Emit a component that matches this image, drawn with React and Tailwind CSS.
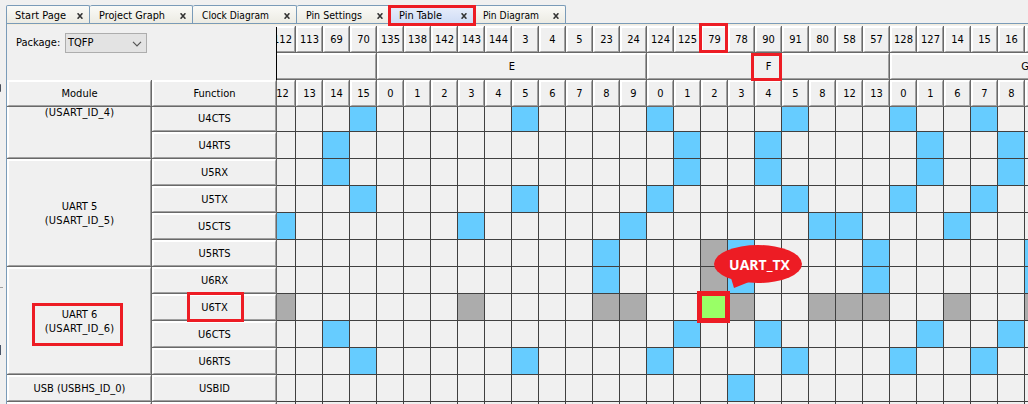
const FONT = 'font-["DejaVu_Sans_Condensed","DejaVu_Sans",sans-serif]';

const TABS = [
  { label: 'Start Page', width: 'w-[84px]', text: 'w-[51px]', first: true },
  { label: 'Project Graph', width: 'w-[103px]', text: 'w-[66px]' },
  { label: 'Clock Diagram', width: 'w-[104px]', text: 'w-[67px]' },
  { label: 'Pin Settings', width: 'w-[93px]', text: 'w-[56px]' },
  { label: 'Pin Table', width: 'w-[84px]', text: 'w-[43px]', active: true },
  { label: 'Pin Diagram', width: 'w-[92px]', text: 'w-[56px]' },
];

const PINS = [112, 113, 69, 70, 135, 138, 142, 143, 144, 3, 4, 5, 23, 24, 124, 125, 79, 78, 90, 91, 80, 58, 57, 128, 127, 14, 15, 16, ''];
const BITS = [12, 13, 14, 15, 0, 1, 2, 3, 4, 5, 6, 7, 8, 9, 0, 1, 2, 3, 4, 5, 8, 12, 13, 0, 1, 6, 7, 8, ''];
const PORTS = [
  { name: '', width: 'w-[108px]' },
  { name: 'E', width: 'w-[270px]' },
  { name: 'F', width: 'w-[243px]' },
  { name: 'G', width: 'w-[270px]' },
];

const MODULES = [
  { lines: ['(USART_ID_4)'], height: 'h-[54px]', align: 'items-start -mt-px' },
  { lines: ['UART 5', '(USART_ID_5)'], height: 'h-[108px]', align: 'items-center pt-px' },
  { lines: ['UART 6', '(USART_ID_6)'], height: 'h-[108px]', align: 'items-center pt-px' },
  { lines: ['USB (USBHS_ID_0)'], height: 'h-[27px]', align: 'items-center' },
  { lines: [''], height: 'h-[27px]', align: 'items-center' },
];

const A = [3, 9, 14, 19, 23, 26];
const B = [2, 15, 18, 24, 27];
const ROWS = [
  { fn: 'U4CTS', blue: A },
  { fn: 'U4RTS', blue: B },
  { fn: 'U5RX', blue: B },
  { fn: 'U5TX', blue: A },
  { fn: 'U5CTS', blue: [0, 7, 13, 20, 21, 25] },
  { fn: 'U5RTS', blue: [12, 17, 22, 28], gray: [16] },
  { fn: 'U6RX', blue: [12, 17, 22, 28], gray: [16] },
  { fn: 'U6TX', blue: [], gray: [0, 7, 12, 13, 17, 20, 21, 22, 25, 28], green: [16] },
  { fn: 'U6CTS', blue: B },
  { fn: 'U6RTS', blue: A },
  { fn: 'USBID', blue: [17] },
  { fn: '', blue: [] },
];

function cellColor(row, i) {
  if (row.green?.includes(i)) return 'bg-[#99ff66]';
  if (row.gray?.includes(i)) return 'bg-[#acacac]';
  if (row.blue.includes(i)) return 'bg-[#66ccff]';
  return 'bg-[#f0f0f0]';
}

function Raised({ className = '', children }) {
  return (
    <div className={`shrink-0 border-r border-b border-[#696969] ${className}`}>
      <div className="flex h-full w-full border-t-2 border-l-2 border-r border-b border-t-white border-l-white border-r-[#a0a0a0] border-b-[#a0a0a0] bg-[#f0f0f0]">
        {children}
      </div>
    </div>
  );
}

function Label({ children }) {
  return <span className="m-auto whitespace-nowrap">{children}</span>;
}

function Mark({ className }) {
  return <div className={`pointer-events-none absolute border-[#ed1c24] ${className}`} />;
}

function Tab({ tab }) {
  return (
    <div
      className={`flex h-[18px] shrink-0 items-center justify-between rounded-t-[2px] border-t border-r border-[#7a9bb8] ${
        tab.first ? 'border-l pl-[8px]' : 'pl-[9px]'
      } pr-[6px] ${tab.width} ${
        tab.active ? 'bg-linear-to-b from-[#e8eefb] to-[#cfdcf5]' : 'bg-linear-to-b from-[#fafaf7] to-[#ecebe3]'
      }`}
    >
      <svg className={`h-[17px] overflow-visible ${tab.text}`}>
        <text x="0" y="13" textLength="100%" lengthAdjust="spacingAndGlyphs" className="fill-black">
          {tab.label}
        </text>
      </svg>
      <svg className="mt-[2px] size-[6px]" viewBox="0 0 6 6">
        <path d="M.6 .3L5.4 5.7M5.4 .3L.6 5.7" stroke="#333" strokeWidth="1.6" />
      </svg>
    </div>
  );
}

export default function App() {
  return (
    <div className={`relative flex h-[404px] w-[1028px] overflow-hidden bg-[#f0f0f0] text-[11px] leading-[14px] text-black ${FONT}`}>
      <div className="flex w-[6px] shrink-0 flex-col items-start">
        <div className="mt-[84px] h-[8px] w-px rounded-r bg-[#4a4f5a]" />
        <div className="mt-[195px] h-px w-[3px] bg-[#a0a0a0]" />
        <div className="mt-[57px] h-[10px] w-px bg-[#4a5568]" />
      </div>
      <div className="flex min-w-0 flex-1 flex-col">
        <div className="flex h-[23px] shrink-0 items-end">
          {TABS.map((t) => (
            <Tab key={t.label} tab={t} />
          ))}
        </div>
        <div className="flex min-h-0 flex-1 border-t border-l border-[#7a9bb8]">
          <div className="flex w-[270px] shrink-0 flex-col">
            <div className="flex h-[56px] shrink-0 items-start border-t border-[#f4eddc] pt-[8px] pl-[9px]">
              <span className="mt-[3px] w-[49px] whitespace-nowrap">Package:</span>
              <div className="flex h-[20px] w-[82px] items-center justify-between border border-[#adadad] bg-[#e3e3e3] pr-[4px] pl-[2px]">
                <span>TQFP</span>
                <svg className="mt-[2px] h-[6px] w-[10px]" viewBox="0 0 10 6">
                  <path d="M1 .8L5 4.8L9 .8" fill="none" stroke="#555" strokeWidth="1.2" />
                </svg>
              </div>
            </div>
            <div className="flex h-[27px] shrink-0">
              <Raised className="w-[145px]"><Label>Module</Label></Raised>
              <Raised className="w-[125px]"><Label>Function</Label></Raised>
            </div>
            <div className="min-h-0 flex-1 overflow-hidden">
              <div className="-mt-[2px] flex">
                <div className="flex flex-col">
                  {MODULES.map((m, i) => (
                    <Raised key={i} className={`w-[145px] ${m.height}`}>
                      <div className={`flex w-full justify-center ${m.align}`}>
                        <div className="flex flex-col items-center whitespace-nowrap">
                          {m.lines.map((l) => (
                            <span key={l} className={l.startsWith('(') ? 'tracking-[0.2px]' : ''}>{l}</span>
                          ))}
                        </div>
                      </div>
                    </Raised>
                  ))}
                </div>
                <div className="flex flex-col">
                  {ROWS.map((r, i) => (
                    <Raised key={i} className="h-[27px] w-[125px]">
                      <Label>{r.fn}</Label>
                    </Raised>
                  ))}
                </div>
              </div>
            </div>
          </div>
          <div className="min-w-0 flex-1 overflow-hidden border-t border-[#f4eddc] pt-px">
            <div className="-ml-[8px] flex w-[900px] flex-col">
              <div className="flex">
                {PINS.map((p, i) => (
                  <Raised key={i} className="h-[27px] w-[27px]"><Label>{p}</Label></Raised>
                ))}
              </div>
              <div className="flex">
                {PORTS.map((p) => (
                  <Raised key={p.name} className={`h-[27px] ${p.width}`}><Label>{p.name}</Label></Raised>
                ))}
              </div>
              <div className="flex">
                {BITS.map((b, i) => (
                  <Raised key={i} className="h-[27px] w-[27px]"><Label>{b}</Label></Raised>
                ))}
              </div>
              {ROWS.map((r, ri) => (
                <div key={ri} className="flex">
                  {PINS.map((_, i) => (
                    <div
                      key={i}
                      className={`w-[27px] shrink-0 border-r border-b border-[#404040] ${ri === 0 ? 'h-[25px]' : 'h-[27px]'} ${cellColor(r, i)}`}
                    />
                  ))}
                </div>
              ))}
            </div>
          </div>
        </div>
      </div>

      <div className="absolute top-[27px] left-[276px] h-[53px] w-px bg-black" />

      <Mark className="top-[5px] left-[388px] h-[21px] w-[88px] border-3" />
      <Mark className="top-[23px] left-[699px] h-[30px] w-[29px] border-3" />
      <Mark className="top-[53px] left-[751px] h-[28px] w-[31px] border-3" />
      <Mark className="top-[303px] left-[32px] h-[43px] w-[91px] border-3" />
      <Mark className="top-[292px] left-[187px] h-[30px] w-[57px] border-3" />
      <Mark className="top-[291px] left-[697px] h-[32px] w-[33px] border-[5px]" />

      <div className="absolute top-[245px] left-[714px] h-[43px] w-[88px]">
        <svg className="absolute inset-0" width="88" height="43" viewBox="0 0 88 43">
          <path d="M17 33L20 43L35 37Z" fill="#ed1c24" />
          <ellipse cx="44" cy="19" rx="44" ry="19" fill="#ed1c24" />
        </svg>
        <div className='relative flex h-[39px] items-center justify-center pl-[3px] font-["Open_Sans",sans-serif] text-[14px] font-bold text-white'>
          UART_TX
        </div>
      </div>
    </div>
  );
}
